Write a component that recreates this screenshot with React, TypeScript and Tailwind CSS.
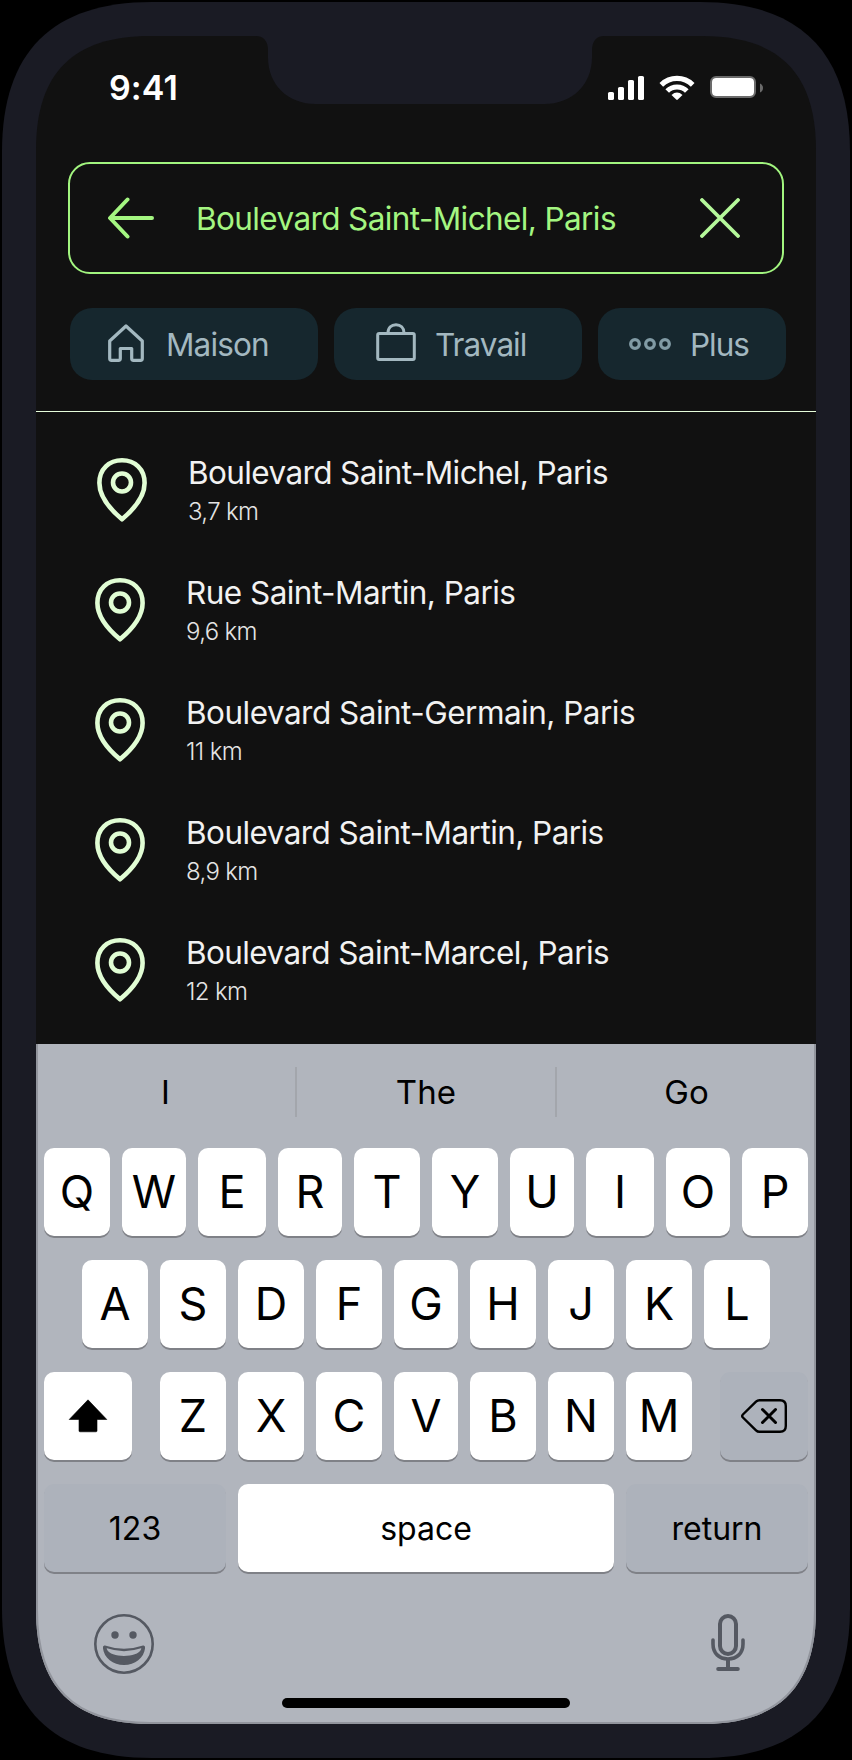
import React from "react";

function Pin() {
  return (
    <svg width="50" height="66" viewBox="0 0 50 66" fill="none" stroke="#e1fdd4" strokeWidth="4.6" strokeLinejoin="round">
      <path d="M25 62.3C38.5 51 47.6 38.500 47.600 26C47.600 12 37.800 3.300 25 3.300S2.400 12 2.400 26C2.400 38.500 11.500 51 25 62.300Z" />
      <circle cx="25" cy="25.500" r="9" />
    </svg>
  );
}

const places = [
  { name: "Boulevard Saint-Michel, Paris", distance: "3,7 km", row: "pl-[61px]", track: "tracking-[-0.61px]" },
  { name: "Rue Saint-Martin, Paris", distance: "9,6 km", row: "pl-[59px]", track: "tracking-[-0.54px]" },
  { name: "Boulevard Saint-Germain, Paris", distance: "11 km", row: "pl-[59px]", track: "tracking-[-0.52px]" },
  { name: "Boulevard Saint-Martin, Paris", distance: "8,9 km", row: "pl-[59px]", track: "tracking-[-0.56px]" },
  { name: "Boulevard Saint-Marcel, Paris", distance: "12 km", row: "pl-[59px]", track: "tracking-[-0.6px]" },
];

const topRow = [
  ["Q", "w-[66px]"], ["W", "w-[64px]"], ["E", "w-[68px]"], ["R", "w-[64px]"], ["T", "w-[66px]"],
  ["Y", "w-[66px]"], ["U", "w-[64px]"], ["I", "w-[68px]"], ["O", "w-[64px]"], ["P", "w-[66px]"],
];

function Key({ children, width = "w-[66px]", dark = false, small = false }: {
  children: React.ReactNode; width?: string; dark?: boolean; small?: boolean;
}) {
  return (
    <button
      className={`flex h-[88px] shrink-0 items-center justify-center rounded-[10px] text-black shadow-[0_2px_0_#7f8187] ${width} ${
        dark ? "bg-[#adb2bb]" : "bg-white"
      } ${small ? "pt-[2px] text-[32px]" : "text-[45px]"}`}
    >
      {children}
    </button>
  );
}

function StatusBar() {
  return (
    <header className="flex h-[126px] shrink-0 items-start justify-between pr-[50px] pl-[73px]">
      <div className="pt-[32px] text-[34px] leading-[40px] font-semibold tracking-[0.1px] text-white">9:41</div>
      <svg className="mt-[38px]" width="160" height="28" viewBox="606 74 160 28">
        <g fill="#fff">
          <rect x="608" y="92" width="6" height="8" rx="1.600" />
          <rect x="618" y="87" width="6" height="13" rx="1.600" />
          <rect x="628" y="80" width="6" height="20" rx="1.600" />
          <rect x="638" y="76" width="6" height="24" rx="1.600" />
          <path d="M671.500 95Q677 90.200 682.500 95L677.800 99.600Q677 100.200 676.200 99.600Z" />
        </g>
        <g fill="none" stroke="#fff" strokeWidth="5.200">
          <path d="M661.300 84.800A22.500 22.500 0 0 1 692.700 84.800" />
          <path d="M667.200 91A14 14 0 0 1 686.800 91" />
        </g>
        <rect x="711" y="77" width="44" height="20" rx="5" fill="none" stroke="#6b6b6b" strokeWidth="2" />
        <rect x="712" y="78" width="42" height="18" rx="4" fill="#fff" />
        <path d="M760 83.500Q763 85 763 88T760 92.500Z" fill="#6b6b6b" />
      </svg>
    </header>
  );
}

function Chip({ width, children }: { width: string; children: React.ReactNode }) {
  return (
    <button className={`flex h-[72px] shrink-0 items-center rounded-[22px] bg-[#16272e] text-[31.5px] leading-[40px] text-[#a3b8c0] ${width}`}>
      {children}
    </button>
  );
}

function Keyboard() {
  return (
    <section className="relative flex h-[680px] shrink-0 flex-col bg-[#b1b5bd] px-[2px]">
      <div className="flex h-[96px] shrink-0 items-center text-[33px] tracking-[0.1px] text-black">
        <div className="w-[257px] pt-[2px] pr-[2px] text-center">I</div>
        <div className="h-[50px] w-[2px] bg-[#a3a6ac]" />
        <div className="w-[258px] pt-[2px] text-center">The</div>
        <div className="h-[50px] w-[2px] bg-[#a3a6ac]" />
        <div className="w-[257px] pt-[2px] pl-[2px] text-center">Go</div>
      </div>
      <div className="flex flex-col gap-[24px] px-[6px] pt-[8px]">
        <div className="flex gap-[12px]">
          {topRow.map(([letter, width]) => (
            <Key key={letter} width={width}>{letter}</Key>
          ))}
        </div>
        <div className="flex gap-[12px] pl-[38px]">
          {"ASDFGHJKL".split("").map((letter) => (
            <Key key={letter} width={letter === "G" ? "w-[64px]" : "w-[66px]"}>{letter}</Key>
          ))}
        </div>
        <div className="flex justify-between">
          <Key width="w-[88px]">
            <svg width="40" height="34" viewBox="0 0 40 34">
              <path d="M20 .8 38.800 20.500H29V31.800Q29 32.800 28 32.800H12Q11 32.800 11 31.800V20.500H1.200Z" fill="#000" stroke="#000" strokeWidth=".6" strokeLinejoin="round" />
            </svg>
          </Key>
          <div className="flex gap-[12px]">
            {"ZXCVBNM".split("").map((letter) => (
              <Key key={letter} width={letter === "V" ? "w-[64px]" : "w-[66px]"}>{letter}</Key>
            ))}
          </div>
          <Key width="w-[88px]" dark>
            <svg width="46" height="34" viewBox="0 0 46 34" fill="none" stroke="#000" strokeLinecap="round" strokeLinejoin="round">
              <path d="M18.500 1.200H39Q44.800 1.200 44.800 7V27Q44.800 32.800 39 32.800H18.500Q16.500 32.800 15 31.300L1.900 18.500Q.5 17 1.900 15.500L15 2.700Q16.500 1.200 18.500 1.200Z" strokeWidth="2.400" />
              <path d="M21.500 10.500 34.500 23.500M34.500 10.500 21.500 23.500" strokeWidth="3" />
            </svg>
          </Key>
        </div>
        <div className="flex gap-[12px]">
          <Key width="w-[182px]" dark small>123</Key>
          <Key width="w-[376px]" small>space</Key>
          <Key width="w-[182px]" dark small>return</Key>
        </div>
      </div>
      <div className="mt-[42px] flex h-[60px] justify-between pr-[68px] pl-[56px]">
        <svg width="60" height="60" viewBox="0 0 60 60">
          <circle cx="30" cy="30" r="28.700" fill="none" stroke="#555962" strokeWidth="2.600" />
          <circle cx="21" cy="21" r="3.700" fill="#555962" />
          <circle cx="39" cy="21" r="3.700" fill="#555962" />
          <path fillRule="evenodd" d="M11 31.500Q30 38 49 31.500Q51.300 31 51.100 34C50 44 41 51 30 51S10 44 8.900 34Q8.700 31 11 31.500ZM13 34.300Q12.500 34 12.900 35.300C15 40 22 42 30 42S45 40 47.100 35.300Q47.500 34 47 34.300Q30 40 13 34.300Z" fill="#555962" />
        </svg>
        <svg width="36" height="58" viewBox="0 0 36 58" fill="none" stroke="#555962" strokeLinecap="round">
          <rect x="10" y="2" width="16" height="38" rx="8" strokeWidth="4" />
          <path d="M3 26V30C3 39 9 45 18 45S33 39 33 30V26" strokeWidth="3.600" />
          <path d="M18 46V54" strokeWidth="4" />
          <path d="M8.200 55H27.800" strokeWidth="4" />
        </svg>
      </div>
      <div className="mx-auto mt-[24px] h-[10px] w-[288px] rounded-full bg-black" />
      <svg className="pointer-events-none absolute inset-0" width="780" height="680" viewBox="0 0 780 680" fill="none">
        <path d="M0 0V566C0 643 37 680 114 680H666C743 680 780 643 780 566V0" stroke="#92959d" strokeWidth="4" />
      </svg>
    </section>
  );
}

export default function App() {
  return (
    <div className="h-[1760px] w-[852px] bg-black p-[2px] font-['Inter','Noto_Sans',sans-serif] antialiased">
      <div className="relative h-[1756px] w-[848px] bg-[#1a1b24] p-[34px] [clip-path:path('M0_150C0_50_50_0_150_0H698C798_0_848_50_848_150V1606C848_1706_798_1756_698_1756H150C50_1756_0_1706_0_1606Z')]">
        <main className="flex h-[1688px] w-[780px] flex-col bg-[#111111] whitespace-nowrap [clip-path:path('M0_114C0_37_37_0_114_0H666C743_0_780_37_780_114V1574C780_1651_743_1688_666_1688H114C37_1688_0_1651_0_1574Z')]">
          <StatusBar />
          <div className="mx-[32px] flex h-[112px] shrink-0 items-center rounded-[22px] border-2 border-[#a2f57f] pr-[42px] pl-[38px] text-[#a4f681]">
            <svg width="46" height="42" viewBox="0 0 46 42" fill="none" stroke="currentColor" strokeWidth="4" strokeLinecap="round" strokeLinejoin="round">
              <path d="M44 21H2.500M19.500 2.500 2 21 19.500 39.500" />
            </svg>
            <div className="ml-[42px] pt-[2px] text-[31.5px] leading-[40px] tracking-[-0.61px]">Boulevard Saint-Michel, Paris</div>
            <svg className="ml-auto text-[#b5f99a]" width="40" height="40" viewBox="0 0 40 40" fill="none" stroke="currentColor" strokeWidth="3.800" strokeLinecap="round">
              <path d="M2 2 38 38M38 2 2 38" />
            </svg>
          </div>
          <div className="mt-[34px] flex shrink-0 gap-[16px] pl-[34px]">
            <Chip width="w-[248px]">
              <svg className="mb-[2px] ml-[38px]" width="36" height="40" viewBox="0 0 36 40" fill="none" stroke="currentColor" strokeWidth="3.200" strokeLinejoin="round">
                <path d="M18 3 34.300 18V35.500Q34.300 37.300 32.500 37.300H25.500Q23.700 37.300 23.700 35.500V25.500H12.300V35.500Q12.300 37.300 10.500 37.300H3.500Q1.700 37.300 1.700 35.500V18Z" />
              </svg>
              <span className="ml-[22px] pt-[2px] tracking-[-0.85px]">Maison</span>
            </Chip>
            <Chip width="w-[248px]">
              <svg className="mb-[4px] ml-[42px]" width="40" height="38" viewBox="0 0 40 38" fill="none" stroke="currentColor" strokeWidth="3" strokeLinejoin="round">
                <rect x="1.700" y="10.500" width="36.600" height="26" rx="1.500" />
                <path d="M12 10C12 4.500 15.500 1.700 20 1.700S28 4.500 28 10" />
              </svg>
              <span className="ml-[19px] pt-[2px] tracking-[-0.95px]">Travail</span>
            </Chip>
            <Chip width="w-[188px]">
              <svg className="ml-[31px]" width="42" height="12" viewBox="0 0 42 12" fill="none" stroke="#819ba5" strokeWidth="3.300">
                <circle cx="6" cy="6" r="4.300" />
                <circle cx="21" cy="6" r="4.300" />
                <circle cx="36" cy="6" r="4.300" />
              </svg>
              <span className="ml-[19px] pt-[2px] tracking-[-1px]">Plus</span>
            </Chip>
          </div>
          <div className="mt-[31px] h-px shrink-0 bg-[#e6fddb]" />
          <ul className="flex h-[632px] shrink-0 flex-col pt-[33px]">
            {places.map((place) => (
              <li key={place.name} className={`flex h-[120px] shrink-0 items-start pt-[12px] ${place.row}`}>
                <Pin />
                <div className="-mt-[4px] ml-[41px]">
                  <div className={`text-[31.5px] leading-[40px] text-[#f2f2f2] ${place.track}`}>{place.name}</div>
                  <div className="mt-px text-[24px] leading-[36px] font-light tracking-[-0.65px] text-[#e4e4e4]">{place.distance}</div>
                </div>
              </li>
            ))}
          </ul>
          <Keyboard />
        </main>
        <svg className="absolute top-[34px] left-[254px]" width="350" height="69" viewBox="256 36 350 69">
          <path d="M256 35V36C264 36 268 42 268 50V57C268 85 288 104 316 104H544C572 104 592 85 592 57V50C592 42 596 36 604 36V35Z" fill="#1a1b24" />
        </svg>
      </div>
    </div>
  );
}
